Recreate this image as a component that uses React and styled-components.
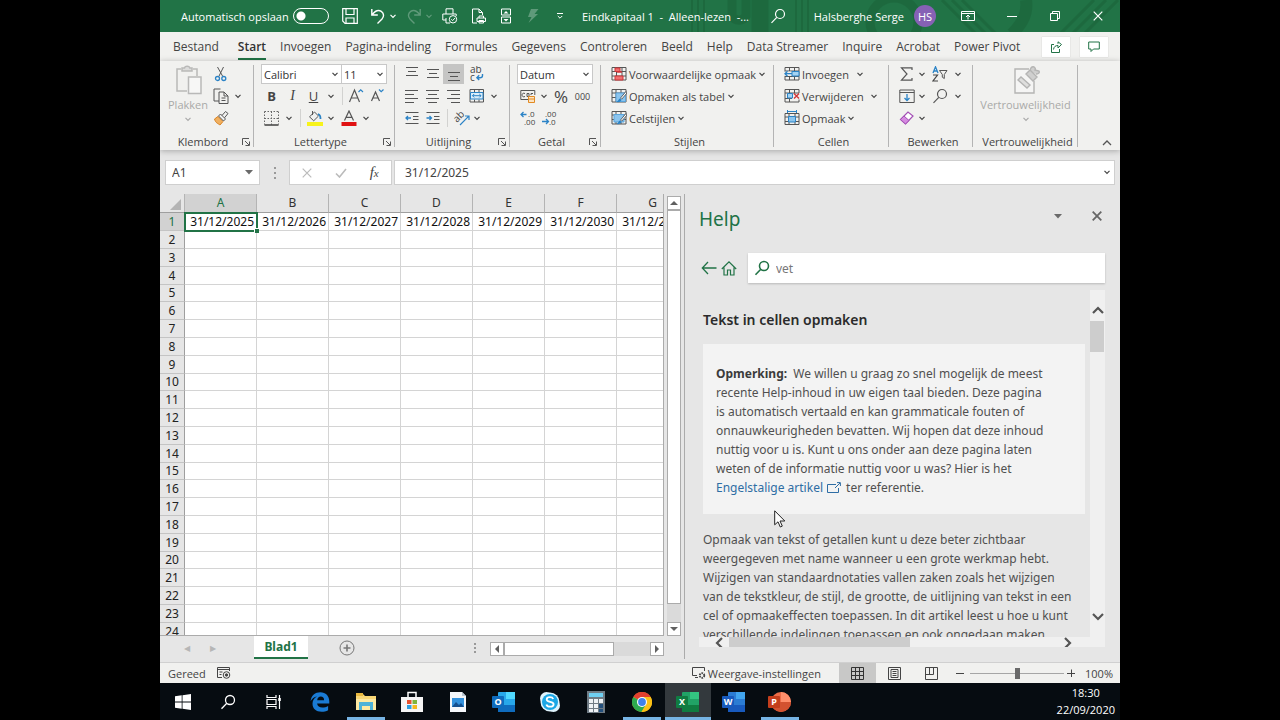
import React from "react";
import styled, { createGlobalStyle, css } from "styled-components";

const GREEN = "#217346";

const Global = createGlobalStyle`
  *, *::before, *::after { box-sizing: border-box; }
  body { margin: 0; background: #000; }
  body, button, input, select, table {
    font-family: "Noto Sans", "Open Sans", sans-serif;
    font-size: 12px;
    color: #444;
  }
  button { border: 0; padding: 0; margin: 0; background: none; white-space: nowrap; }
  h1, h2, p { margin: 0; }
  svg { display: block; flex: none; }
`;

const chromeFont = css`
  &, button, select, label {
    font-family: "Open Sans", "Noto Sans", sans-serif;
  }
`;

/* ---------- page frame ---------- */
const Stage = styled.div`
  display: grid;
  grid-template-columns: 1fr 6fr 1fr;
  min-height: 100vh;
  background: #000;
`;
const Desktop = styled.div`
  grid-column: 2;
  min-width: 0;
  display: flex;
  flex-direction: column;
  overflow: hidden;
  background: #e6e6e6;
`;

/* ---------- title bar ---------- */
const TitleBar = styled.header`
  ${chromeFont}
  position: relative;
  display: flex;
  align-items: center;
  height: 32px;
  background: ${GREEN};
  color: #fff;
  overflow: hidden;
`;
const TitleArt = styled.svg`
  position: absolute;
  top: 0;
  right: 0;
`;
const AutoSave = styled.label`
  position: relative;
  display: flex;
  align-items: center;
  justify-content: space-between;
  width: 148px;
  margin-left: 21px;
  margin-right: 9px;
  font-size: 11px;
  white-space: nowrap;
`;
const Toggle = styled.input`
  appearance: none;
  width: 36px;
  height: 16px;
  margin: 0;
  border: 1px solid #fff;
  border-radius: 8px;
  background: radial-gradient(circle at 7px 7px, #fff 4px, transparent 5px);
`;
const BarButton = styled.button`
  position: relative;
  display: flex;
  align-items: center;
  justify-content: center;
  width: ${(p) => p.$w || 26}px;
  height: 32px;
  color: #fff;
  opacity: ${(p) => (p.$dim ? 0.28 : 1)};
`;
const Split = styled.span`
  display: flex;
  margin: 0 1px 0 5px;
`;
const DocTitle = styled.span`
  position: relative;
  width: 192px;
  padding-left: 9px;
  font-size: 11px;
  white-space: pre;
`;
const User = styled.span`
  position: relative;
  margin-left: auto;
  font-size: 11px;
  white-space: nowrap;
`;
const Avatar = styled.span`
  position: relative;
  display: grid;
  place-items: center;
  width: 22px;
  height: 22px;
  margin: 0 10px;
  border-radius: 50%;
  background: #8661b5;
  font-size: 11px;
`;

/* ---------- ribbon ---------- */
const Tabs = styled.nav`
  ${chromeFont}
  display: flex;
  align-items: center;
  height: 29px;
  padding: 0 12px 0 6px;
  background: #f1f1ef;
`;
const Tab = styled.button`
  position: relative;
  height: 28px;
  padding: 0 7px;
  font-size: 12px;
  color: #444;
  ${(p) =>
    p.$active &&
    css`
      margin-left: 5px;
      font-weight: 600;
      color: #333;
      &::after {
        content: "";
        position: absolute;
        left: 7px;
        right: 7px;
        bottom: 1px;
        height: 2px;
        background: ${GREEN};
      }
    `}
`;
const Spacer = styled.span`
  flex: 1;
`;
const WhiteButton = styled.button`
  display: grid;
  place-items: center;
  flex: none;
  width: 28px;
  height: 20px;
  margin-left: 10px;
  background: #fff;
  color: ${GREEN};
  box-shadow: 0 0 1px #bbb;
`;
const Ribbon = styled.div`
  ${chromeFont}
  display: flex;
  height: 89px;
  padding-top: 2px;
  background: #f1f1ef;
  box-shadow: 0 1px 6px rgba(0, 0, 0, 0.28);
  position: relative;
`;
const Group = styled.section`
  position: relative;
  display: flex;
  flex-direction: column;
  width: ${(p) => p.$w}px;
  height: 87px;
  &::after {
    content: "";
    position: absolute;
    right: 0;
    top: 2px;
    bottom: 3px;
    width: 1px;
    background: #b4b4b4;
  }
`;
const GroupBody = styled.div`
  display: flex;
  height: 70px;
  padding-left: ${(p) => p.$l || 0}px;
`;
const Rows = styled.div`
  display: flex;
  flex-direction: column;
`;
const Row = styled.div`
  display: flex;
  align-items: center;
  height: 22px;
`;
const GroupLabel = styled.footer`
  display: flex;
  align-items: center;
  height: 17px;
  padding-left: 6px;
  padding-right: 2px;
  font-size: 11px;
  white-space: nowrap;
  span { flex: 1; text-align: center; }
`;
const IconButton = styled.button`
  display: flex;
  align-items: center;
  justify-content: center;
  width: ${(p) => p.$w || 21}px;
  height: 20px;
  background: ${(p) => (p.$on ? "#c5c5c4" : "transparent")};
`;
const Divider = styled.span`
  width: 1px;
  height: 18px;
  background: #d2d2d0;
`;
const DividerSlot = styled.span`
  display: grid;
  place-items: center;
  width: ${(p) => p.$w}px;
`;
const TextButton = styled.button`
  display: flex;
  align-items: center;
  gap: 2px;
  height: 20px;
  font-size: 11px;
`;
const BigButton = styled.button`
  display: flex;
  flex-direction: column;
  align-items: center;
  width: ${(p) => p.$w}px;
  padding-top: 2px;
  font-size: 11px;
  line-height: 16px;
  color: #a9a9a8;
  gap: 2px;
`;
const Glyph = styled.span`
  font-family: ${(p) => (p.$serif ? '"Liberation Serif", serif' : "inherit")};
  font-size: ${(p) => p.$s || 13}px;
  font-weight: ${(p) => (p.$b ? 700 : 400)};
  font-style: ${(p) => (p.$i ? "italic" : "normal")};
  text-decoration: ${(p) => (p.$u ? "underline" : "none")};
`;
const SelectWrap = styled.label`
  position: relative;
  display: block;
  width: ${(p) => p.$w}px;
  height: 20px;
  margin-right: -1px;
  select {
    appearance: none;
    width: 100%;
    height: 20px;
    padding: 0 2px;
    border: 1px solid #c8c8c8;
    border-radius: 0;
    background: #fff;
    font-size: 11px;
    color: #333;
  }
  svg { position: absolute; right: 3px; top: 6px; }
`;
const Collapse = styled.button`
  align-self: flex-end;
  margin-left: auto;
  margin-right: 8px;
  padding-bottom: 4px;
`;

/* ---------- formula bar ---------- */
const FormulaBar = styled.div`
  display: flex;
  height: 44px;
  padding: 10px 5px 9px;
`;
const NameBox = styled.label`
  position: relative;
  width: 95px;
  input {
    width: 100%;
    height: 25px;
    padding: 0 6px;
    border: 1px solid #cfcfcf;
    outline: 0;
  }
  svg { position: absolute; right: 7px; top: 10px; }
`;
const Dots = styled.span`
  display: grid;
  place-items: center;
  width: ${(p) => p.$w}px;
`;
const FxBox = styled.div`
  display: flex;
  align-items: center;
  width: 103px;
  height: 25px;
  border: 1px solid #cfcfcf;
  background: #fff;
`;
const FormulaInput = styled.label`
  position: relative;
  flex: 1;
  margin-left: 2px;
  input {
    width: 100%;
    height: 25px;
    padding: 0 10px;
    border: 1px solid #cfcfcf;
    outline: 0;
  }
  svg { position: absolute; right: 4px; top: 8px; }
`;

/* ---------- worksheet ---------- */
const Work = styled.main`
  display: grid;
  grid-template-columns: minmax(0, 1fr) 435px;
  height: 468px;
`;
const SheetPane = styled.div`
  display: flex;
  flex-direction: column;
  border-right: 1px solid #ababab;
  margin-bottom: 3px;
`;
const SheetTop = styled.div`
  display: flex;
  height: 442px;
`;
const GridClip = styled.div`
  flex: 1;
  min-width: 0;
  overflow: hidden;
  border-right: 1px solid #ababab;
  border-bottom: 1px solid #ababab;
`;
const Sheet = styled.table`
  width: 529px;
  table-layout: fixed;
  border-collapse: separate;
  border-spacing: 0;
  background: #fff;
  th, td { padding: 0; overflow: hidden; white-space: nowrap; font-size: 12px; }
  thead th {
    height: 19px;
    line-height: 18px;
    background: #e6e6e6;
    border-right: 1px solid #b4b4b4;
    border-bottom: 1px solid #9f9f9f;
    font-weight: 400;
    color: #333;
  }
  thead th:first-child { width: 25px; }
  tbody th {
    height: 18px;
    line-height: 17px;
    background: #e6e6e6;
    border-right: 1px solid #9f9f9f;
    border-bottom: 1px solid #c4c4c4;
    font-weight: 400;
    color: #222;
  }
  td {
    line-height: 17px;
    border-right: 1px solid #d4d4d4;
    border-bottom: 1px solid #d4d4d4;
    text-align: right;
    color: #111;
  }
  tbody tr:nth-child(5n) th { height: 17px; line-height: 16px; }
  tbody tr:nth-child(5n) td { line-height: 16px; }
  td:nth-child(n + 2) { padding-right: 2px; }
`;
const HeadCell = styled.th`
  && {
    ${(p) => p.$on && css`background: #d2d2d2; color: ${GREEN};`}
  }
`;
const ActiveCell = styled.td`
  &&& {
    position: relative;
    overflow: visible;
    outline: 2px solid ${GREEN};
    outline-offset: -1px;
  }
  &::after {
    content: "";
    position: absolute;
    right: -3px;
    bottom: -3px;
    width: 5px;
    height: 5px;
    background: ${GREEN};
    border-top: 1px solid #fff;
    border-left: 1px solid #fff;
  }
`;
const VScroll = styled.div`
  display: flex;
  flex-direction: column;
  width: 14px;
  margin: 2px 3px 0 3px;
  background: #dadada;
`;
const ScrollButton = styled.button`
  display: grid;
  place-items: center;
  width: 14px;
  height: 14px;
  border: 1px solid #ababab;
  background: #fff;
`;
const Thumb = styled.div`
  border: 1px solid #ababab;
  background: #fff;
  ${(p) => (p.$v ? "height: 394px;" : "width: 110px; height: 14px;")}
`;
const SheetTabs = styled.div`
  display: flex;
  height: 23px;
  padding-left: 14px;
`;
const NavArrow = styled.button`
  width: 26px;
  font-size: 8px;
  color: #b6b6b6;
`;
const SheetTab = styled.button`
  width: 54px;
  height: 23px;
  margin-left: 28px;
  background: #fff;
  border-bottom: 2px solid ${GREEN};
  font-weight: 700;
  color: ${GREEN};
`;
const AddSheet = styled.button`
  margin-left: 31px;
`;
const HScroll = styled.div`
  display: flex;
  width: 174px;
  height: 14px;
  margin: 6px 20px 0 0;
  background: #dadada;
`;

/* ---------- help pane ---------- */
const Help = styled.aside`
  display: flex;
  flex-direction: column;
  padding: 0 15px 15px 14px;
  min-width: 0;
`;
const HelpHead = styled.div`
  display: flex;
  align-items: flex-start;
  height: 59px;
  padding-top: 12px;
  h1 { flex: 1; font-size: 19px; line-height: 26px; font-weight: 400; color: ${GREEN}; }
`;
const HelpButton = styled.button`
  display: grid;
  place-items: center;
  width: ${(p) => p.$w || 20}px;
  height: 20px;
`;
const SearchRow = styled.div`
  display: flex;
  align-items: center;
  height: 30px;
`;
const SearchBox = styled.label`
  display: flex;
  align-items: center;
  flex: 1;
  height: 30px;
  margin-left: 9px;
  padding-left: 6px;
  background: #fff;
  box-shadow: 0 1px 2px rgba(0, 0, 0, 0.2);
  input { flex: 1; min-width: 0; border: 0; outline: 0; padding: 0 6px; color: #777; background: none; }
`;
const HelpBody = styled.div`
  display: grid;
  grid-template-columns: minmax(0, 1fr) 15px;
  grid-template-rows: minmax(0, 1fr) 10px;
  height: 357px;
  margin-top: 7px;
`;
const Article = styled.article`
  overflow: hidden;
  padding: 0 5px 0 4px;
  white-space: nowrap;
  font-size: 12px;
  line-height: 19px;
  color: #505050;
  h2 { margin: 20px 0 14px; font-size: 14px; line-height: 20px; font-weight: 600; color: #2b2b2b; }
`;
const Note = styled.div`
  height: 170px;
  margin-bottom: 16px;
  padding: 20px 13px;
  background: #f3f3f3;
  b { color: #3b3b3b; }
  a { color: #2e6da4; text-decoration: none; }
  svg { display: inline-block; vertical-align: -1px; margin: 0 2px 0 4px; }
`;
const SideScroll = styled.div`
  display: flex;
  flex-direction: column;
  grid-row: 1 / 3;
  grid-column: 2;
  padding-top: 10px;
  padding-bottom: 20px;
  background: #f0f0f0;
`;
const SideThumb = styled.div`
  width: 14px;
  height: 31px;
  margin: 1px 1px auto 0;
  background: #cdcdcd;
`;
const BottomScroll = styled.div`
  display: flex;
  overflow: hidden;
  height: 10px;
  background: #f0f0f0;
  padding: 0 14px;
`;
const BottomThumb = styled.div`
  width: 181px;
  margin-right: auto;
  background: #cdcdcd;
`;
const Pointer = styled.svg`
  position: fixed;
  left: 774px;
  top: 510px;
`;

/* ---------- status bar and task bar ---------- */
const Status = styled.div`
  ${chromeFont}
  display: flex;
  align-items: center;
  height: 21px;
  padding: 0 7px 0 8px;
  background: #f1f1ef;
  border-top: 1px solid #d0d0d0;
  font-size: 11px;
`;
const ViewButton = styled.button`
  display: grid;
  place-items: center;
  width: 37px;
  height: 20px;
  background: ${(p) => (p.$on ? "#c8c8c7" : "transparent")};
`;
const StatusButton = styled.button`
  display: flex;
  align-items: center;
  gap: 2px;
  font-size: 11px;
  margin-right: 18px;
`;
const Zoom = styled.input`
  appearance: none;
  width: 94px;
  height: 12px;
  margin: 0 3px 0 0;
  background: linear-gradient(#a6a6a6, #a6a6a6) center / 100% 1px no-repeat;
  &::-webkit-slider-thumb { appearance: none; width: 5px; height: 11px; background: #6a6a6a; }
`;
const Percent = styled.span`
  width: 38px;
  text-align: right;
`;
const TaskBar = styled.footer`
  ${chromeFont}
  display: flex;
  height: 37px;
  background: #060c11;
`;
const Task = styled.button`
  position: relative;
  display: grid;
  place-items: center;
  width: 46px;
  height: 37px;
  background: ${(p) => (p.$active ? "#33393d" : "transparent")};
  &:first-child { width: 45px; }
  &::after {
    content: "";
    position: absolute;
    left: ${(p) => (p.$active ? 0 : 4)}px;
    right: ${(p) => (p.$active ? 0 : 4)}px;
    bottom: 0;
    height: ${(p) => (p.$open ? 3 : 0)}px;
    background: #76b4e4;
  }
`;
const Clock = styled.time`
  margin-left: auto;
  padding: 1px 5px 0 0;
  font-size: 11px;
  line-height: 17px;
  text-align: center;
  color: #fff;
`;

/* ---------- icons ---------- */
const Svg = ({ s = 16, w, h, vb, children, ...rest }) => (
  <svg width={w || s} height={h || s} viewBox={vb || `0 0 ${w || s} ${h || s}`} fill="none" stroke="currentColor" aria-hidden="true" {...rest}>
    {children}
  </svg>
);
const Letters = ({ x, y, size = 8, weight = 400, c = "#444", children }) => (
  <text x={x} y={y} fontSize={size} fontWeight={weight} fontFamily="Open Sans" fill={c} stroke="none">{children}</text>
);
const Chev = ({ c = "#444" }) => (
  <Svg w={8} h={8} stroke={c} strokeWidth="1.200"><path d="M1.500 2.800 4 5.300 6.500 2.800" /></Svg>
);
const Down = () => (
  <Svg w={8} h={5} stroke="none" fill="#6a6a6a"><path d="M0 0h8L4 4.500z" /></Svg>
);
const Tri = ({ d }) => (
  <Svg s={8} stroke="none" fill="#606060"><path d={{ up: "M0 6h8L4 2z", down: "M0 2h8L4 6z", left: "M6 0v8L2 4z", right: "M2 0v8l4-4z" }[d]} /></Svg>
);
const Launcher = () => (
  <Svg s={8} stroke="#555"><path d="M.5 7V.5H7M3 3l4 4M7.500 3.500v4h-4" /></Svg>
);
const Search = ({ s = 16, c = "currentColor", sw = 1.2 }) => (
  <Svg s={s} vb="0 0 16 16" stroke={c} strokeWidth={sw}><circle cx="10" cy="6" r="4.500" /><path d="M6.800 9.300 1.500 14.800" /></Svg>
);
const SaveIcon = () => (
  <Svg><path d="M.7.7h14.600v14.600H3L.7 13zM4 .7v5.800h8V.7M4 15v-5h8v5" strokeWidth="1.200" /></Svg>
);
const UndoIcon = ({ flip }) => (
  <Svg strokeWidth="1.400"><path transform={flip ? "translate(16 0) scale(-1 1)" : undefined} d="M1.800 1v6h6M2.200 6.600C5 3 8.500 1.600 11.300 3.400c3 2 2.700 5.400.7 7.600L7.500 15.500" /></Svg>
);
const PrintIcon = () => (
  <Svg><path d="M4 6V.8h7V6M4 12H.8V6h13.400v2M4 10v5h4" /><circle cx="11" cy="11.300" r="3.700" /><path d="m9.300 11.300 1.400 1.300 2.200-2.500" /></Svg>
);
const PagePrintIcon = () => (
  <Svg><path d="M6 15H1.500V1H8l3.500 3.500V7M8 1v3.500h3.500M6 10h8.500v3.500H6zM8 10V8h4.500v2M8 12.500h4.500V15H8z" /></Svg>
);
const SortIcon = () => (
  <Svg><path d="M3.500 1h9v6h-9zM3.500 9h9v6h-9z" /><path d="M5.500 5.500h5L8 3zM5.500 11h5L8 13.500z" fill="currentColor" stroke="none" /></Svg>
);
const Bolt = () => (
  <Svg stroke="none" fill="currentColor"><path d="M6 1h7.500L9.500 6H13L3.500 15 6.500 9H3z" /></Svg>
);
const QatMore = () => (
  <Svg s={8}><path d="M1 1.500h6M1.800 4 4 6.200 6.200 4" /></Svg>
);
const RibbonIcon = () => (
  <Svg w={14} h={12}><path d="M.5 1.500h13v9H.5zM.5 3.500h13M7 9.500v-4M5 7l2-2 2 2" /></Svg>
);
const ShareIcon = () => (
  <Svg s={12}><path d="M4 3.500H1.500v8h8V8M3.500 8.500C4 5.500 5.500 4.500 8 4.500V7l3.500-3.500L8 .8v2" /></Svg>
);
const CommentIcon = () => (
  <Svg s={12}><path d="M.7 1h10.600v7H5.500L3 10.500V8H.7z" /></Svg>
);
const Clipboard = () => (
  <Svg w={28} h={30} stroke="#b9b9b8" strokeWidth="1.500"><path d="M7 4H3v22h10M19 4h4v7" /><path d="M8 6V3h2.500c.3-2.500 5-2.500 5.300 0H18v3z" fill="#dcdcdb" /><path d="M14.500 12H27v16.500H14.500z" fill="#f7f7f6" /></Svg>
);
const Scissors = () => (
  <Svg><path d="m4.500 1 5.300 9.500M10.500 1 5.800 10.500" stroke="#555" /><circle cx="4.500" cy="12.500" r="2" stroke="#2b83c6" strokeWidth="1.300" /><circle cx="10.800" cy="12.500" r="2" stroke="#2b83c6" strokeWidth="1.300" /></Svg>
);
const CopyIcon = () => (
  <Svg stroke="#555"><path d="M6 13H1V1h6.500M6 4h5l4 4v7.500H6zM11 4v4h4M8.500 10h4M8.500 12.500h4" /></Svg>
);
const Brush = () => (
  <Svg><path d="m1.500 9 3.500-2.500 5 5L7 15C5 13.500 2.500 13 1.500 9z" fill="#f0b060" stroke="#d98324" /><path d="M5.500 6 7.500 4l5 5-2 2zM9 5.500l3.500-4 2.500 2-3.500 4.300" stroke="#555" /></Svg>
);
const Lines = ({ l }) => (
  <Svg s={14} stroke="#555">{l.map(([x1, x2, y], i) => <path key={i} d={`M${x1} ${y}.5H${x2}`} />)}</Svg>
);
const Wrap = () => (
  <Svg s={16}><Letters x={1} y={7} size={10}>ab</Letters><Letters x={1} y={15} size={10}>c</Letters><path d="M13.500 8v1.500c0 1.500-1 2.200-2.500 2.200H8M10.200 9.300 7.900 11.700l2.300 2.400" stroke="#2b83c6" strokeWidth="1.400" /></Svg>
);
const Merge = () => (
  <Svg><path d="M1 1.500h13.500v12.500H1zM5.500 1.500V4M10 1.500V4M5.500 11.500V14M10 11.500V14" stroke="#555" /><path d="M1.500 4.500h12.500v6.500H1.500z" fill="#dceefa" stroke="#2b83c6" /><path d="M3.500 7.700h8.500M5.200 6 3.500 7.700l1.700 1.700M10.300 6 12 7.700l-1.700 1.700" stroke="#2b83c6" /></Svg>
);
const Indent = ({ r }) => (
  <Svg s={14}><path d="M.5 1.500h13M8 5.500h5.500M8 8.500h5.500M.5 12.500h13" stroke="#555" /><path d={r ? "M.5 7h5M3.500 5l2 2-2 2" : "M1 7h5M3 5 1 7l2 2"} stroke="#2b83c6" strokeWidth="1.300" /></Svg>
);
const Orient = () => (
  <Svg><g transform="rotate(-45 5 8)"><Letters x={0} y={10} size={10}>ab</Letters></g><path d="M6 15 14.800 6.200M11 6h4v4" stroke="#2b83c6" strokeWidth="1.200" /></Svg>
);
const Borders = () => (
  <Svg s={15} stroke="#666"><path d="M.5.500h14M.5 7.500h14M.5.500v13M7.500.500v13M14.500.500v13" strokeDasharray="1.500 1.500" /><path d="M.5 14h14" stroke="#333" strokeWidth="1.400" /></Svg>
);
const Fill = () => (
  <Svg><path d="M2.500 6.800 7.500 2l4 4-4.800 4.800zM5.500 1v4" stroke="#555" /><path d="M11 4c2 .5 2.500 2.500 2.500 5" stroke="#2b83c6" strokeWidth="1.800" /><path d="M0 12h16v4H0z" fill="#f7f31b" stroke="none" /></Svg>
);
const FontColor = () => (
  <Svg><path d="M3.500 10.500 8 1l4.500 9.500M5 7.300h6" stroke="#555" strokeWidth="1.200" /><path d="M.5 12h15v4H.5z" fill="#e01212" stroke="none" /></Svg>
);
const Grow = ({ up }) => (
  <Svg s={16}><path d={up ? "M1.500 14 6.500 2l5 12M3 10h7" : "M2.500 13 6.500 4l4 9M4 10h5"} stroke="#555" strokeWidth="1.200" /><path d={up ? "m10.500 4 2.200-2.200L15 4" : "M10 1.500l2.200 2.200 2.300-2.200"} stroke="#2b83c6" strokeWidth="1.200" /></Svg>
);
const Money = () => (
  <Svg><path d="M8 11.500H.8v-9h14V7" stroke="#555" /><path d="M5 5.500c-2-1-3 .5-3 1.500s1 2.500 3 1.500M7 5.500h2v3H7zM13 5.500h-2V7" stroke="#555" /><path d="M8.500 8.500h6v6h-6zM8.500 11h6" stroke="#e28a22" fill="#fbe3c2" /></Svg>
);
const Decimal = ({ more }) => (
  <Svg w={16} h={16}>
    <path d={more ? "M1 4.500h5.500M3.500 2 1 4.500 3.500 7" : "M1 11.500h6.500M5 9l2.500 2.500L5 14"} stroke="#2b83c6" strokeWidth="1.300" />
    <Letters x={more ? 8 : 4} y={7}>{more ? ".0" : ".00"}</Letters>
    <Letters x={more ? 4 : 8} y={15}>{more ? ".00" : ".0"}</Letters>
  </Svg>
);
const CondFmt = () => (
  <Svg><path d="M1 1.500h14v12.500H1zM1 5.500h14M1 10h14M5.500 1.500V14M11 1.500V14" stroke="#555" /><path d="M4 2h5v3.500H4zM4 10h8v4H4z" fill="#f07070" stroke="#d13438" /><path d="M6 6h5" stroke="#d13438" strokeWidth="1.500" /></Svg>
);
const TableFmt = ({ solid }) => (
  <Svg><path d="M1 1.500h14v12.500H1zM1 5h14M1 9.500h14M5 1.500V14M10 1.500V14" stroke="#555" /><path d={solid ? "M3 4.500h10v7.500H3z" : "M5 5h9.500v8.500H5z"} fill="#8cc5ee" stroke="#5aa5dc" /><path d="M15 3.500 9.500 10l1.200 1.200L16 5z" fill="#fff" stroke="#444" strokeWidth=".8" /><path d="M9 10.500c-1.500.5-1.500 2.500-3.500 3.500 2.500.5 4.500-.5 5-2z" fill="#2b83c6" stroke="none" /></Svg>
);
const InsertIcon = () => (
  <Svg><path d="M1 1.500h14v12.500H1zM1 5h14M1 10.500h14M5.500 1.500V5M10.500 1.500V5M5.500 10.500V14M10.500 10.500V14" stroke="#555" /><path d="M8 5.500h7v4.500H8z" fill="#a5d3f2" stroke="#2b83c6" /><path d="M0 5.600h7v4.300H0z" fill="#f1f1ef" stroke="none" /><path d="M1 7.700h7M3.500 5.300 1 7.700l2.500 2.500" stroke="#2b83c6" strokeWidth="1.300" /></Svg>
);
const DeleteIcon = () => (
  <Svg><path d="M15 5V1.500H1V14h14v-2.500M1 5h14M1 10.500h7M5.500 1.500V5M10.500 1.500V5M5.500 10.500V14" stroke="#555" /><path d="M3.500 5.500h5V10h-5z" fill="#a5d3f2" stroke="#2b83c6" /><path d="m10 5.500 5 5m0-5-5 5" stroke="#d13438" strokeWidth="1.400" /></Svg>
);
const FormatIcon = () => (
  <Svg><path d="M1 3.500h14V14.500H1zM1 7h14M1 11.500h14M5 3.500v11M11 3.500v11" stroke="#555" /><path d="M4.500 6.500h7V12h-7z" fill="#8cc5ee" stroke="#2b83c6" /><path d="M3.500 1.500h9M3.500 0v3M12.500 0v3" stroke="#2b83c6" /></Svg>
);
const Sigma = () => (
  <Svg s={14} stroke="#555" strokeWidth="1.200"><path d="M12 3V.8H1.500L7 7l-5.500 6.200H12V11" /></Svg>
);
const SortFilter = () => (
  <Svg><path d="m1 7 2.500-6.200L6 7M2 5h3" stroke="#2b83c6" strokeWidth="1.300" /><path d="M1 9h4.500L1 15h5" stroke="#444" strokeWidth="1.200" /><path d="M7.500 4.500H15L12.300 8.500v4l-2-1.300V8.500z" stroke="#555" /></Svg>
);
const FillDown = () => (
  <Svg><path d="M.8 2h14.400v12.500H.8zM.8 4.500h14.400" stroke="#555" /><path d="M8 6v6.500M5.500 10 8 12.500 10.500 10" stroke="#2b83c6" strokeWidth="1.300" /></Svg>
);
const Eraser = () => (
  <Svg><path d="M1.500 9.500 9 2l5 4-7.500 8z" fill="#fff" stroke="#a350b5" strokeWidth="1.200" /><path d="m1.500 9.500 3.500-3.500 5 4.500L6.500 14z" fill="#d58be0" stroke="#a350b5" /></Svg>
);
const Sensitivity = () => (
  <Svg w={28} h={30} stroke="#b4b4b3" strokeWidth="1.400"><path d="M17 4H3v24h19V16" fill="#f5f5f4" /><path d="m6 15 3-3 9 8-3 3z" fill="#dededd" /><path d="m14 9 4-4 7 7-4 4zM17 6c2-1 1-3 3-4s4 1 3 3l4 1c1 2-1 3-3 3" fill="#cfcfce" /></Svg>
);
const XMark = ({ s = 10, c = "currentColor", sw = 1.2 }) => (
  <Svg s={s} vb="0 0 10 10" stroke={c} strokeWidth={sw}><path d="m.7.7 8.600 8.600m0-8.600L.7 9.300" /></Svg>
);

/* task bar and Office product marks */
const Office = ({ dark, mid, light, letter, label }) => (
  <svg width="24" height="22" viewBox="0 0 24 22" role="img" aria-label={label}>
    <rect x="6" y="1" width="17" height="20" rx="1" fill={mid} />
    <rect x="14" y="1" width="9" height="7" fill={light} />
    <rect x="6" y="14" width="17" height="7" fill={dark} />
    <rect x="0" y="5" width="12" height="12" rx="1" fill={dark} />
    <text x="6" y="14" textAnchor="middle" fontSize="9" fontWeight="700" fontFamily="Noto Sans" fill="#fff">{letter}</text>
  </svg>
);
const tasks = [
  ["Start", null, <svg width="16" height="16" fill="#fff"><path d="M0 2.200 6.700 1.300v6.300H0zM7.500 1.200 16 0v7.600H7.500zM0 8.400h6.700v6.300L0 13.800zM7.500 8.400H16V16l-8.500-1.200z" /></svg>],
  ["Zoeken", null, <Search c="#fff" sw={1.3} />],
  ["Taakweergave", null, <Svg stroke="#fff" strokeWidth="1.200"><path d="M1 1v2.500h9V1M1 5.500h9v5H1zM1 15v-2.500h9V15M13.500 1v14" /><path d="M12.300 4h2.500v3h-2.500z" fill="#fff" stroke="none" /></Svg>],
  ["Edge", null, <svg width="20" height="20" fill="#1a7bd4"><path d="M.6 9.200C1.200 3.500 5.200.3 10.300.3c5.500 0 9 3.900 9 9.100v2.200H7.100c.2 2.700 2.500 4 5.200 4 2.100 0 4-.6 5.800-1.700v4.300c-1.900 1-4.200 1.500-6.500 1.500-5.600 0-9.100-3.200-9.100-8 0-3.300 1.600-5.700 4.500-7.200C4.100 5 2 6.500.6 9.200zM7.200 8.200h6.900c0-2.200-1.200-3.600-3.300-3.600-2 0-3.300 1.400-3.600 3.600z" /></svg>],
  ["Verkenner", "open", <svg width="22" height="20"><path d="M1 2h7l2 2h11v14H1z" fill="#f8d775" /><path d="M1 7h20v11H1z" fill="#fde9a2" /><path d="M4 10h14v8h-3v-4H7v4H4z" fill="#4db2d8" /><path d="M1 1h7v3H1z" fill="#e8b93f" /></svg>],
  ["Store", null, <svg width="22" height="22"><path d="M7 6V1.500h8V6" fill="none" stroke="#fff" strokeWidth="1.500" /><path d="M0 6h22v15H0z" fill="#f5f5f5" /><path d="M6 9h4.500v4H6z" fill="#e8502c" /><path d="M11.500 9H16v4h-4.500z" fill="#7fb53b" /><path d="M6 14h4.500v4H6z" fill="#2f9fe0" /><path d="M11.500 14H16v4h-4.500z" fill="#f6b81c" /></svg>],
  ["Afbeelding", null, <svg width="18" height="20"><path d="M1 0h12l4 4v16H1z" fill="#f4f7fa" /><path d="M3 6h12v9H3z" fill="#3291dc" /><path d="m3 15 4-5 3 3 2-2 3 4z" fill="#134f8f" /><path d="M13 0v4h4" fill="#b9c7d3" /></svg>],
  ["Outlook", null, <Office label="Outlook" dark="#0f6cbd" mid="#28a8ea" light="#50d9ff" letter="O" />],
  ["Skype", null, <svg width="22" height="22"><circle cx="7.500" cy="7.500" r="6.500" fill="#dff4fd" /><circle cx="14.500" cy="14.500" r="6.500" fill="#dff4fd" /><circle cx="11" cy="11" r="9.500" fill="#dff4fd" /><circle cx="11" cy="11" r="8" fill="#1ba7e5" /><path d="M14.200 8c-.5-1.300-1.900-1.800-3.300-1.800-1.700 0-3.200.8-3.200 2.300 0 3.300 6.900 1.500 6.900 4.700 0 1.600-1.600 2.500-3.500 2.500-1.900 0-3.300-.8-3.700-2.300" fill="none" stroke="#fff" strokeWidth="1.800" /></svg>],
  ["Rekenmachine", null, <svg width="18" height="22"><path d="M0 0h18v22H0z" fill="#6f7b84" /><path d="M2 2h14v4H2z" fill="#6fd0f2" />{[8, 13, 18].map((y) => [2, 7, 12].map((x) => <rect key={`${x}${y}`} x={x} y={y} width="4" height={y === 18 ? 3 : 4} fill={x === 12 && y > 8 ? "#24507c" : "#eef2f5"} />))}</svg>],
  ["Chrome", "open", <svg width="20" height="20" viewBox="0 0 20 20"><circle cx="10" cy="10" r="10" fill="#fbc116" /><path d="M10 10 1.300 5A10 10 0 0 1 18.700 5z" fill="#e2402f" /><path d="M10 10 1.300 5A10 10 0 0 0 9.500 20l4.500-7.500z" fill="#2da94f" /><path d="M10 5h8.700A10 10 0 0 1 9.500 20l5-8z" fill="#fbc116" /><circle cx="10" cy="10" r="5" fill="#fff" /><circle cx="10" cy="10" r="3.900" fill="#3f82ec" /></svg>],
  ["Excel", "active", <Office label="Excel" dark="#107c41" mid="#21a366" light="#33c481" letter="X" />],
  ["Word", null, <Office label="Word" dark="#185abd" mid="#2b7cd3" light="#41a5ee" letter="W" />],
  ["PowerPoint", "open", <svg width="24" height="22"><circle cx="13" cy="11" r="10" fill="#ed6c47" /><path d="M13 1a10 10 0 0 1 10 10H13z" fill="#ff8f6b" /><path d="M3 11h20a10 10 0 0 1-20 0z" fill="#d35230" /><rect y="5" width="12" height="12" rx="1" fill="#c43e1c" /><text x="6" y="14" textAnchor="middle" fontSize="9" fontWeight="700" fontFamily="Noto Sans" fill="#fff">P</text></svg>],
];

const tabNames = ["Bestand", "Start", "Invoegen", "Pagina-indeling", "Formules", "Gegevens", "Controleren", "Beeld", "Help", "Data Streamer", "Inquire", "Acrobat", "Power Pivot"];
const columns = ["A", "B", "C", "D", "E", "F", "G"];
const rows = Array.from({ length: 24 }, (_, i) => i + 1);

const alignLines = {
  top: [[1, 13, 0], [3, 11, 4], [1, 13, 8]],
  middle: [[1, 13, 2], [3, 11, 6], [1, 13, 10]],
  bottom: [[1, 13, 5], [3, 11, 9], [1, 13, 13]],
  left: [[0, 13, 1], [0, 9, 5], [0, 13, 9], [0, 9, 13]],
  center: [[0, 13, 1], [2, 11, 5], [0, 13, 9], [2, 11, 13]],
  right: [[0, 13, 1], [4, 13, 5], [0, 13, 9], [4, 13, 13]],
};

const LabelBar = ({ children, launch }) => (
  <GroupLabel>
    <span>{children}</span>
    {launch && <IconButton $w={12} aria-label={`${children} instellingen`}><Launcher /></IconButton>}
  </GroupLabel>
);

function RibbonBar() {
  return (
    <Ribbon>
      <Group $w={94}>
        <GroupBody $l={8}>
          <BigButton $w={40}><Clipboard />Plakken<Chev c="#aaa" /></BigButton>
          <Rows>
            <Row><IconButton $w={26} aria-label="Knippen"><Scissors /></IconButton></Row>
            <Row><IconButton $w={26} aria-label="Kopiëren"><CopyIcon /></IconButton><Chev /></Row>
            <Row><IconButton $w={26} aria-label="Opmaak kopiëren"><Brush /></IconButton></Row>
          </Rows>
        </GroupBody>
        <LabelBar launch>Klembord</LabelBar>
      </Group>
      <Group $w={141}>
        <GroupBody $l={7}>
          <Rows>
            <Row>
              <SelectWrap $w={81}><select aria-label="Lettertype"><option>Calibri</option></select><Chev /></SelectWrap>
              <SelectWrap $w={46}><select aria-label="Tekengrootte"><option>11</option></select><Chev /></SelectWrap>
            </Row>
            <Row>
              <IconButton aria-label="Vet"><Glyph $b>B</Glyph></IconButton>
              <IconButton aria-label="Cursief"><Glyph $i $serif $s={14}>I</Glyph></IconButton>
              <IconButton aria-label="Onderstrepen"><Glyph $u>U</Glyph></IconButton>
              <IconButton $w={14} aria-label="Meer onderstrepen"><Chev /></IconButton>
              <DividerSlot $w={8}><Divider /></DividerSlot>
              <IconButton $w={20} aria-label="Groter"><Grow up /></IconButton>
              <IconButton $w={22} aria-label="Kleiner"><Grow /></IconButton>
            </Row>
            <Row>
              <IconButton aria-label="Randen"><Borders /></IconButton>
              <IconButton $w={14} aria-label="Meer randen"><Chev /></IconButton>
              <DividerSlot $w={8}><Divider /></DividerSlot>
              <IconButton $w={22} aria-label="Opvulkleur"><Fill /></IconButton>
              <IconButton $w={10} aria-label="Meer opvulkleuren"><Chev /></IconButton>
              <IconButton $w={26} aria-label="Tekstkleur"><FontColor /></IconButton>
              <IconButton $w={8} aria-label="Meer tekstkleuren"><Chev /></IconButton>
            </Row>
          </Rows>
        </GroupBody>
        <LabelBar launch>Lettertype</LabelBar>
      </Group>
      <Group $w={115}>
        <GroupBody $l={6}>
          <Rows>
            <Row>
              <IconButton aria-label="Boven"><Lines l={alignLines.top} /></IconButton>
              <IconButton aria-label="Midden"><Lines l={alignLines.middle} /></IconButton>
              <IconButton $on aria-label="Onder"><Lines l={alignLines.bottom} /></IconButton>
              <IconButton $w={26} aria-label="Terugloop"><Wrap /></IconButton>
            </Row>
            <Row>
              <IconButton aria-label="Links"><Lines l={alignLines.left} /></IconButton>
              <IconButton aria-label="Centreren"><Lines l={alignLines.center} /></IconButton>
              <IconButton aria-label="Rechts"><Lines l={alignLines.right} /></IconButton>
              <IconButton $w={26} aria-label="Samenvoegen"><Merge /></IconButton>
              <IconButton $w={8} aria-label="Meer samenvoegen"><Chev /></IconButton>
            </Row>
            <Row>
              <IconButton aria-label="Inspringing verkleinen"><Indent /></IconButton>
              <IconButton aria-label="Inspringing vergroten"><Indent r /></IconButton>
              <DividerSlot $w={8}><Divider /></DividerSlot>
              <IconButton $w={22} aria-label="Afdrukstand"><Orient /></IconButton>
              <IconButton $w={8} aria-label="Meer afdrukstanden"><Chev /></IconButton>
            </Row>
          </Rows>
        </GroupBody>
        <LabelBar launch>Uitlijning</LabelBar>
      </Group>
      <Group $w={91}>
        <GroupBody $l={7}>
          <Rows>
            <Row><SelectWrap $w={76}><select aria-label="Getalnotatie"><option>Datum</option></select><Chev /></SelectWrap></Row>
            <Row>
              <IconButton aria-label="Valuta"><Money /></IconButton>
              <IconButton $w={12} aria-label="Meer valuta"><Chev /></IconButton>
              <IconButton $w={22} aria-label="Procent"><Glyph $s={17}>%</Glyph></IconButton>
              <IconButton $w={21} aria-label="Duizendtallen"><Glyph $s={9}>000</Glyph></IconButton>
            </Row>
            <Row>
              <IconButton aria-label="Meer decimalen"><Decimal more /></IconButton>
              <IconButton aria-label="Minder decimalen"><Decimal /></IconButton>
            </Row>
          </Rows>
        </GroupBody>
        <LabelBar launch>Getal</LabelBar>
      </Group>
      <Group $w={173}>
        <GroupBody $l={10}>
          <Rows>
            <Row><TextButton><CondFmt />Voorwaardelijke opmaak<Chev /></TextButton></Row>
            <Row><TextButton><TableFmt />Opmaken als tabel<Chev /></TextButton></Row>
            <Row><TextButton><TableFmt solid />Celstijlen<Chev /></TextButton></Row>
          </Rows>
        </GroupBody>
        <LabelBar>Stijlen</LabelBar>
      </Group>
      <Group $w={115}>
        <GroupBody $l={10}>
          <Rows>
            <Row><TextButton><InsertIcon />Invoegen</TextButton><IconButton aria-label="Meer invoegen"><Chev /></IconButton></Row>
            <Row><TextButton><DeleteIcon />Verwijderen</TextButton><IconButton aria-label="Meer verwijderen"><Chev /></IconButton></Row>
            <Row><TextButton><FormatIcon />Opmaak<Chev /></TextButton></Row>
          </Rows>
        </GroupBody>
        <LabelBar>Cellen</LabelBar>
      </Group>
      <Group $w={84}>
        <GroupBody $l={7}>
          <Rows>
            <Row>
              <IconButton $w={22} aria-label="AutoSom"><Sigma /></IconButton><IconButton $w={8} aria-label="Meer functies"><Chev /></IconButton>
              <IconButton $w={28} aria-label="Sorteren en filteren"><SortFilter /></IconButton><IconButton $w={8} aria-label="Meer sorteren"><Chev /></IconButton>
            </Row>
            <Row>
              <IconButton $w={22} aria-label="Doorvoeren"><FillDown /></IconButton><IconButton $w={8} aria-label="Meer doorvoeren"><Chev /></IconButton>
              <IconButton $w={28} aria-label="Zoeken en selecteren"><Search c="#555" /></IconButton><IconButton $w={8} aria-label="Meer zoeken"><Chev /></IconButton>
            </Row>
            <Row><IconButton $w={22} aria-label="Wissen"><Eraser /></IconButton><IconButton $w={8} aria-label="Meer wissen"><Chev /></IconButton></Row>
          </Rows>
        </GroupBody>
        <LabelBar>Bewerken</LabelBar>
      </Group>
      <Group $w={105}>
        <GroupBody $l={5}><BigButton $w={95}><Sensitivity />Vertrouwelijkheid<Chev c="#aaa" /></BigButton></GroupBody>
        <LabelBar>Vertrouwelijkheid</LabelBar>
      </Group>
      <Collapse aria-label="Lint samenvouwen"><Svg w={10} h={6} stroke="#555" strokeWidth="1.300"><path d="M1 5l4-4 4 4" /></Svg></Collapse>
    </Ribbon>
  );
}

export default function App() {
  return (
    <Stage>
      <Global />
      <Desktop>
        <TitleBar>
          <TitleArt width="440" height="32" fill="none" stroke="#1b6239" opacity="0.55">
            <path d="M12 0v32M18 0v32M24 0v32M116 0v32M122 0v32M128 0v32" strokeWidth="2" />
            <path d="M52 0v16a8 8 0 0 0 14 0V0M76 0v32M84 0v32" strokeWidth="9" />
            <circle cx="214" cy="22" r="24" strokeWidth="9" />
            <path d="M262 0l34 34M272 0l34 34M282 0l34 34M380 34l34-34M392 34l34-34M404 34l34-34" strokeWidth="3" />
            <path d="M346 0c2 14-4 24-14 34" strokeWidth="12" />
          </TitleArt>
          <AutoSave>Automatisch opslaan<Toggle type="checkbox" role="switch" /></AutoSave>
          <BarButton $w={24} aria-label="Opslaan"><SaveIcon /></BarButton>
          <Split>
            <BarButton $w={22} aria-label="Ongedaan maken"><UndoIcon /></BarButton>
            <BarButton $w={8} aria-label="Meer ongedaan maken"><Chev c="#fff" /></BarButton>
          </Split>
          <Split>
            <BarButton $w={22} $dim aria-label="Opnieuw"><UndoIcon flip /></BarButton>
            <BarButton $w={8} $dim aria-label="Meer opnieuw"><Chev c="#fff" /></BarButton>
          </Split>
          <BarButton $w={32} aria-label="Afdrukken"><PrintIcon /></BarButton>
          <BarButton $w={26} aria-label="Afdrukvoorbeeld"><PagePrintIcon /></BarButton>
          <BarButton $w={27} aria-label="Sorteren"><SortIcon /></BarButton>
          <BarButton $w={27} $dim aria-label="Snelle actie"><Bolt /></BarButton>
          <BarButton $w={27} aria-label="Werkbalk aanpassen"><QatMore /></BarButton>
          <DocTitle>{"Eindkapitaal 1  -  Alleen-lezen  -..."}</DocTitle>
          <BarButton aria-label="Zoeken"><Search /></BarButton>
          <User>Halsberghe Serge</User>
          <Avatar>HS</Avatar>
          <BarButton $w={44} aria-label="Lintopties"><RibbonIcon /></BarButton>
          <BarButton $w={43} aria-label="Minimaliseren"><Svg s={10}><path d="M0 5.500h10" /></Svg></BarButton>
          <BarButton $w={43} aria-label="Herstellen"><Svg s={10}><path d="M.5 2.500h7v7h-7zM2.500 2.500v-2h7v7h-2" /></Svg></BarButton>
          <BarButton $w={44} aria-label="Sluiten"><XMark /></BarButton>
        </TitleBar>
        <Tabs>
          {tabNames.map((t) => <Tab key={t} $active={t === "Start"}>{t}</Tab>)}
          <Spacer />
          <WhiteButton aria-label="Delen"><ShareIcon /></WhiteButton>
          <WhiteButton aria-label="Opmerkingen"><CommentIcon /></WhiteButton>
        </Tabs>
        <RibbonBar />
        <FormulaBar>
          <NameBox><input aria-label="Naamvak" defaultValue="A1" /><Down /></NameBox>
          <Dots $w={29}><Svg w={2} h={12} fill="#999" stroke="none"><path d="M0 0h2v2H0zM0 5h2v2H0zM0 10h2v2H0z" /></Svg></Dots>
          <FxBox>
            <IconButton $w={34} aria-label="Annuleren"><XMark c="#bbb" /></IconButton>
            <IconButton $w={34} aria-label="Invoeren"><Svg w={12} h={10} stroke="#bbb" strokeWidth="1.600"><path d="m1 5.500 3.500 3.500L11 1" /></Svg></IconButton>
            <IconButton $w={34} aria-label="Functie invoegen"><Glyph $i $serif $s={15}>f</Glyph><Glyph $i $serif $s={11}>x</Glyph></IconButton>
          </FxBox>
          <FormulaInput><input aria-label="Formulebalk" defaultValue="31/12/2025" /><Chev /></FormulaInput>
        </FormulaBar>
        <Work>
          <SheetPane>
            <SheetTop>
              <GridClip>
                <Sheet>
                  <thead>
                    <tr>
                      <HeadCell aria-label="Alles selecteren"><Svg w={22} h={16} stroke="none" fill="#b4b4b4"><path d="M21 4v11H10z" /></Svg></HeadCell>
                      {columns.map((c) => <HeadCell key={c} $on={c === "A"}>{c}</HeadCell>)}
                    </tr>
                  </thead>
                  <tbody>
                    {rows.map((r) => (
                      <tr key={r}>
                        <HeadCell $on={r === 1}>{r}</HeadCell>
                        {columns.map((c, i) => {
                          const value = r === 1 ? `31/12/${2025 + i}` : "";
                          return r === 1 && i === 0 ? <ActiveCell key={c}>{value}</ActiveCell> : <td key={c}>{value}</td>;
                        })}
                      </tr>
                    ))}
                  </tbody>
                </Sheet>
              </GridClip>
              <VScroll>
                <ScrollButton aria-label="Omhoog"><Tri d="up" /></ScrollButton>
                <Thumb $v />
                <Spacer />
                <ScrollButton aria-label="Omlaag"><Tri d="down" /></ScrollButton>
              </VScroll>
            </SheetTop>
            <SheetTabs>
              <NavArrow aria-label="Vorig blad">◀</NavArrow>
              <NavArrow aria-label="Volgend blad">▶</NavArrow>
              <SheetTab>Blad1</SheetTab>
              <AddSheet aria-label="Nieuw blad"><Svg stroke="#777"><circle cx="8" cy="8" r="7" /><path d="M8 4.500v7M4.500 8h7" strokeWidth="1.600" /></Svg></AddSheet>
              <Spacer />
              <Dots $w={30}><Svg w={2} h={10} fill="#999" stroke="none"><path d="M0 0h2v2H0zM0 4h2v2H0zM0 8h2v2H0z" /></Svg></Dots>
              <HScroll>
                <ScrollButton aria-label="Naar links"><Tri d="left" /></ScrollButton>
                <Thumb />
                <Spacer />
                <ScrollButton aria-label="Naar rechts"><Tri d="right" /></ScrollButton>
              </HScroll>
            </SheetTabs>
          </SheetPane>
          <Help>
            <HelpHead>
              <h1>Help</h1>
              <HelpButton $w={62} aria-label="Taakvensteropties"><Down /></HelpButton>
              <HelpButton $w={16} aria-label="Sluiten"><XMark c="#666" sw={1.8} /></HelpButton>
            </HelpHead>
            <SearchRow>
              <HelpButton aria-label="Terug"><Svg stroke={GREEN} strokeWidth="1.300"><path d="M15.500 8H1.500M7 2 1.300 8 7 14" /></Svg></HelpButton>
              <HelpButton aria-label="Startpagina"><Svg stroke={GREEN} strokeWidth="1.200"><path d="M.8 9 8 1.800 15.200 9M3 7.500V15h3.500v-5h3v5H13V7.500" /></Svg></HelpButton>
              <SearchBox><Search c={GREEN} sw={1.6} /><input aria-label="Zoeken in Help" defaultValue="vet" /></SearchBox>
            </SearchRow>
            <HelpBody>
              <Article>
                <h2>Tekst in cellen opmaken</h2>
                <Note>
                  <b>Opmerking:</b>&nbsp; We willen u graag zo snel mogelijk de meest<br />
                  recente Help-inhoud in uw eigen taal bieden. Deze pagina<br />
                  is automatisch vertaald en kan grammaticale fouten of<br />
                  onnauwkeurigheden bevatten. Wij hopen dat deze inhoud<br />
                  nuttig voor u is. Kunt u ons onder aan deze pagina laten<br />
                  weten of de informatie nuttig voor u was? Hier is het<br />
                  <a href="#artikel">Engelstalige artikel<Svg w={14} h={11} stroke="#2e6da4"><path d="M9 2.500H.5v8h11V6M8 6l5-5M10 .6h3.400V4" /></Svg></a> ter referentie.
                </Note>
                <p>
                  Opmaak van tekst of getallen kunt u deze beter zichtbaar<br />
                  weergegeven met name wanneer u een grote werkmap hebt.<br />
                  Wijzigen van standaardnotaties vallen zaken zoals het wijzigen<br />
                  van de tekstkleur, de stijl, de grootte, de uitlijning van tekst in een<br />
                  cel of opmaakeffecten toepassen. In dit artikel leest u hoe u kunt<br />
                  verschillende indelingen toepassen en ook ongedaan maken.
                </p>
              </Article>
              <SideScroll>
                <HelpButton $w={15} aria-label="Omhoog"><Svg w={12} h={8} stroke="#555" strokeWidth="2.200"><path d="m1 7 5-5 5 5" /></Svg></HelpButton>
                <SideThumb />
                <HelpButton $w={15} aria-label="Omlaag"><Svg w={12} h={8} stroke="#555" strokeWidth="2.200"><path d="m1 1 5 5 5-5" /></Svg></HelpButton>
              </SideScroll>
              <BottomScroll>
                <Svg w={16} h={16} stroke="#555" strokeWidth="2.200"><path d="M9 1 4 6l5 5" /></Svg>
                <BottomThumb />
                <Svg w={16} h={16} stroke="#555" strokeWidth="2.200"><path d="m5 1 5 5-5 5" /></Svg>
              </BottomScroll>
            </HelpBody>
          </Help>
        </Work>
        <Status>
          <span>Gereed</span>
          <ViewButton aria-label="Macro opnemen"><Svg w={14} h={12}><path d="M5 10.500H.5v-10h12V4M.5 2.500h12M2.500 5h3M2.500 7.500h2" /><circle cx="9.500" cy="8" r="3.300" /><circle cx="9.500" cy="8" r="1.200" fill="#444" /></Svg></ViewButton>
          <Spacer />
          <StatusButton><Svg w={14} h={12}><path d="M5 8.500H.5v-8h12V4M3 10.500h3" /><circle cx="10" cy="8.500" r="2.300" strokeWidth="1.800" strokeDasharray="1.500 .8" /></Svg>Weergave-instellingen</StatusButton>
          <ViewButton $on aria-label="Normaal"><Svg w={13} h={13} stroke="#333"><path d="M.5.500h12v12H.5zM4.500.500v12M8.500.500v12M.5 4.500h12M.5 8.500h12" /></Svg></ViewButton>
          <ViewButton aria-label="Pagina-indeling"><Svg w={13} h={13}><path d="M.5.500h12v12H.5zM3 2.500h7v8H3zM4.500 4.500h4M4.500 6.500h4M4.500 8.500h4" /></Svg></ViewButton>
          <ViewButton aria-label="Pagina-eindevoorbeeld"><Svg w={13} h={13}><path d="M.5.500h12v12H.5zM4.500.500v7M8.500.500v7M.5 7.500h8" /></Svg></ViewButton>
          <HelpButton aria-label="Uitzoomen"><Svg s={8}><path d="M0 4.500h8" /></Svg></HelpButton>
          <Zoom type="range" aria-label="Zoomen" min="0" max="100" defaultValue="50" readOnly />
          <HelpButton $w={8} aria-label="Inzoomen"><Svg s={8}><path d="M0 4.500h8M4.500.500v8" /></Svg></HelpButton>
          <Percent>100%</Percent>
        </Status>
        <TaskBar>
          {tasks.map(([name, state, icon]) => (
            <Task key={name} aria-label={name} $open={Boolean(state)} $active={state === "active"}>{icon}</Task>
          ))}
          <Clock>18:30<br />22/09/2020</Clock>
        </TaskBar>
      </Desktop>
      <Pointer width="12" height="18" viewBox="0 0 12 18" aria-hidden="true">
        <path d="M.7.800v14l3.300-3 2.300 5.200 2-.9L6 11h4.800z" fill="#fff" stroke="#222" />
      </Pointer>
    </Stage>
  );
}
